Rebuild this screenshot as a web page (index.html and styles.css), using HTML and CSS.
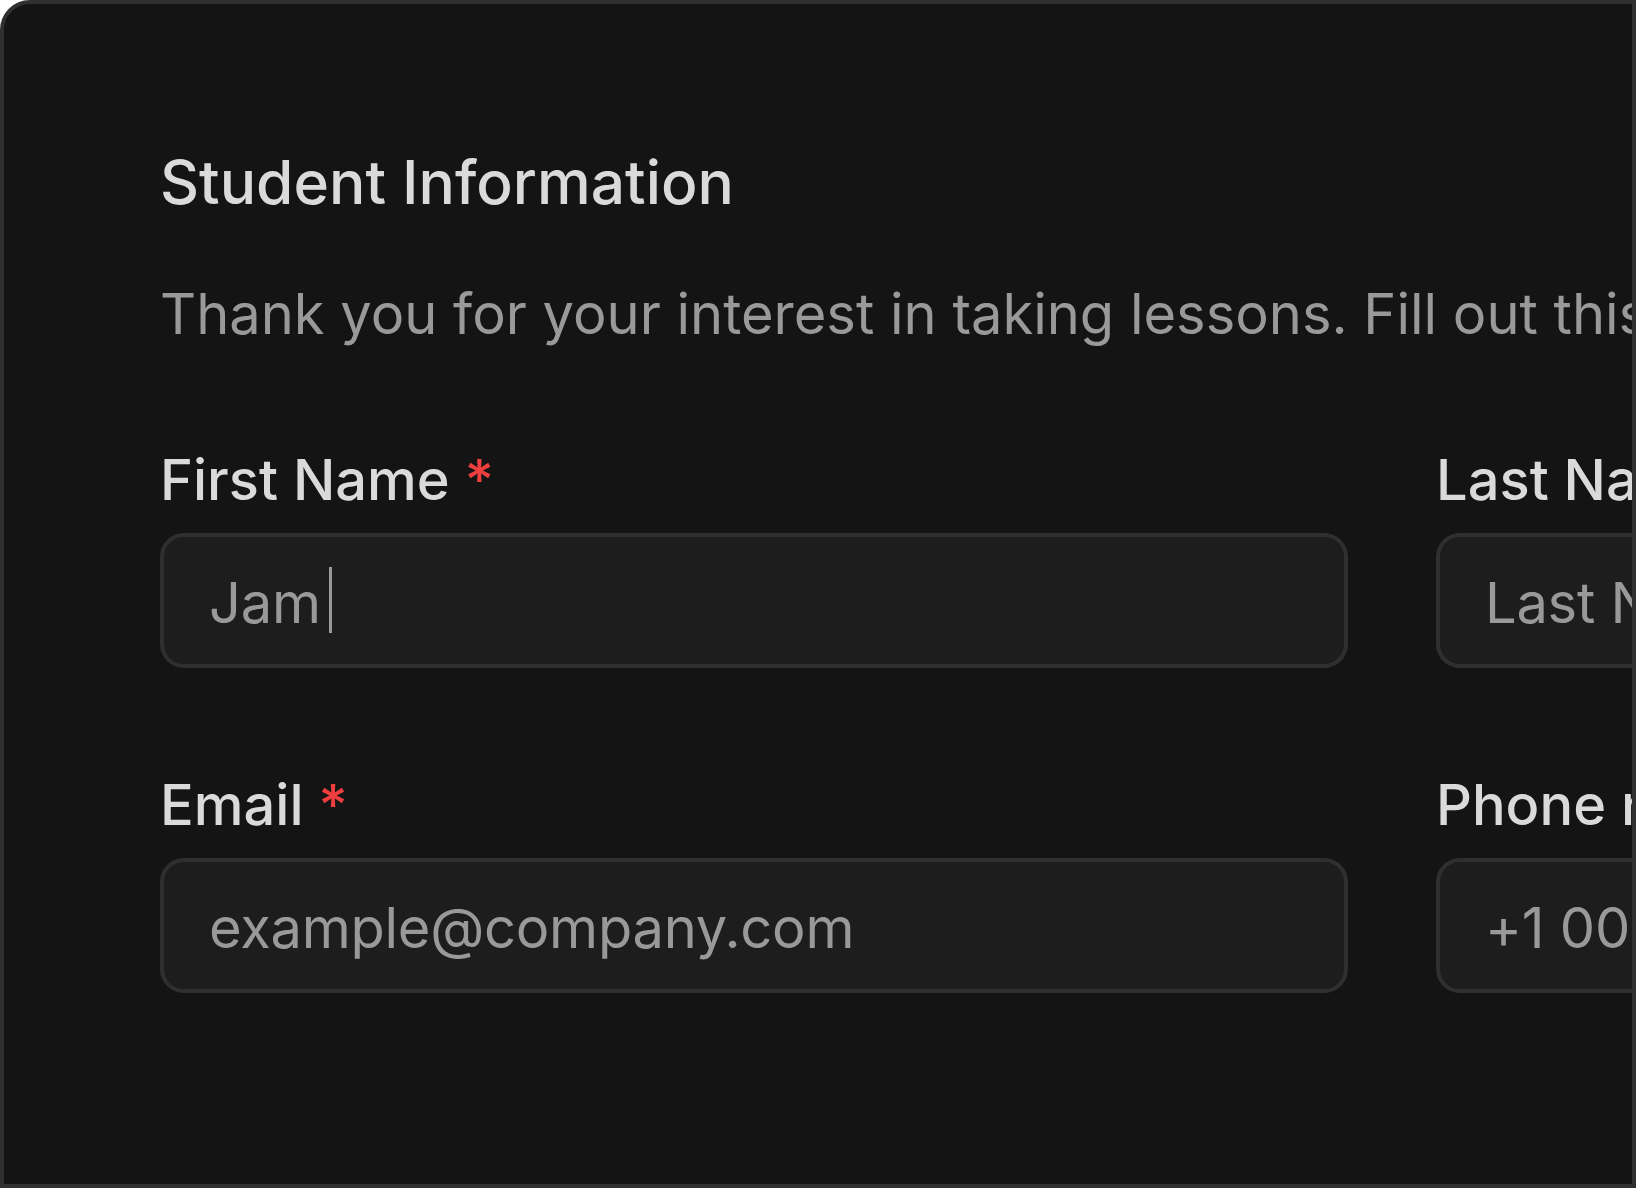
FILE: index.html
```html
<!DOCTYPE html>
<html lang="en">
<head>
<meta charset="utf-8">
<title>Student Information</title>
<link rel="stylesheet" href="styles.css">
</head>
<body>
<div class="frame">
  <form class="content">
    <h1 class="title">Student Information</h1>
    <p class="desc">Thank you for your interest in taking lessons. Fill out this form</p>
    <div class="grid">
      <div class="field">
        <label class="label">First Name <span class="req">*</span></label>
        <div class="input"><span class="value">Jam</span><span class="caret"></span></div>
      </div>
      <div class="field">
        <label class="label">Last Name</label>
        <div class="input"><span class="placeholder">Last Name</span></div>
      </div>
      <div class="field">
        <label class="label">Email <span class="req">*</span></label>
        <div class="input"><span class="placeholder">example@company.com</span></div>
      </div>
      <div class="field">
        <label class="label">Phone number</label>
        <div class="input"><span class="placeholder">+1 000 000 0000</span></div>
      </div>
    </div>
  </form>
</div>
</body>
</html>
```
FILE: styles.css
```css
html, body {
  margin: 0;
  padding: 0;
  background: #ffffff;
}

.frame {
  width: 1636px;
  height: 1188px;
  box-sizing: border-box;
  border: 4px solid #303030;
  border-radius: 30px 0 0 0;
  background: #141414;
  overflow: hidden;
  font-family: Inter, "Noto Sans", sans-serif;
}

.content {
  padding: 140px 0 0 156px;
  width: max-content;
  margin: 0;
}

.title {
  margin: 0;
  font-size: 60.5px;
  line-height: 76.8px;
  font-weight: 500;
  color: #dadada;
}

.desc {
  margin: 55px 0 0;
  font-size: 56px;
  line-height: 76px;
  font-weight: 400;
  color: #999999;
  white-space: nowrap;
}

.grid {
  margin-top: 90px;
  display: grid;
  grid-template-columns: 1188px 1188px;
  column-gap: 88px;
  row-gap: 99px;
}

.field {
  display: flex;
  flex-direction: column;
  gap: 15px;
}

.label {
  font-size: 56px;
  line-height: 76px;
  font-weight: 500;
  color: #dadada;
  white-space: nowrap;
}

.req {
  color: #ef3e3e;
}

.input {
  height: 135px;
  box-sizing: border-box;
  border: 4px solid #2f2f2f;
  border-radius: 24px;
  background: #1d1d1d;
  display: flex;
  align-items: center;
  padding: 5px 45px 0;
  font-size: 56px;
  letter-spacing: -0.25px;
  color: #999999;
  white-space: nowrap;
}

.caret {
  width: 3px;
  height: 66px;
  margin: -5px 0 0 8px;
  background: #999999;
}
```
